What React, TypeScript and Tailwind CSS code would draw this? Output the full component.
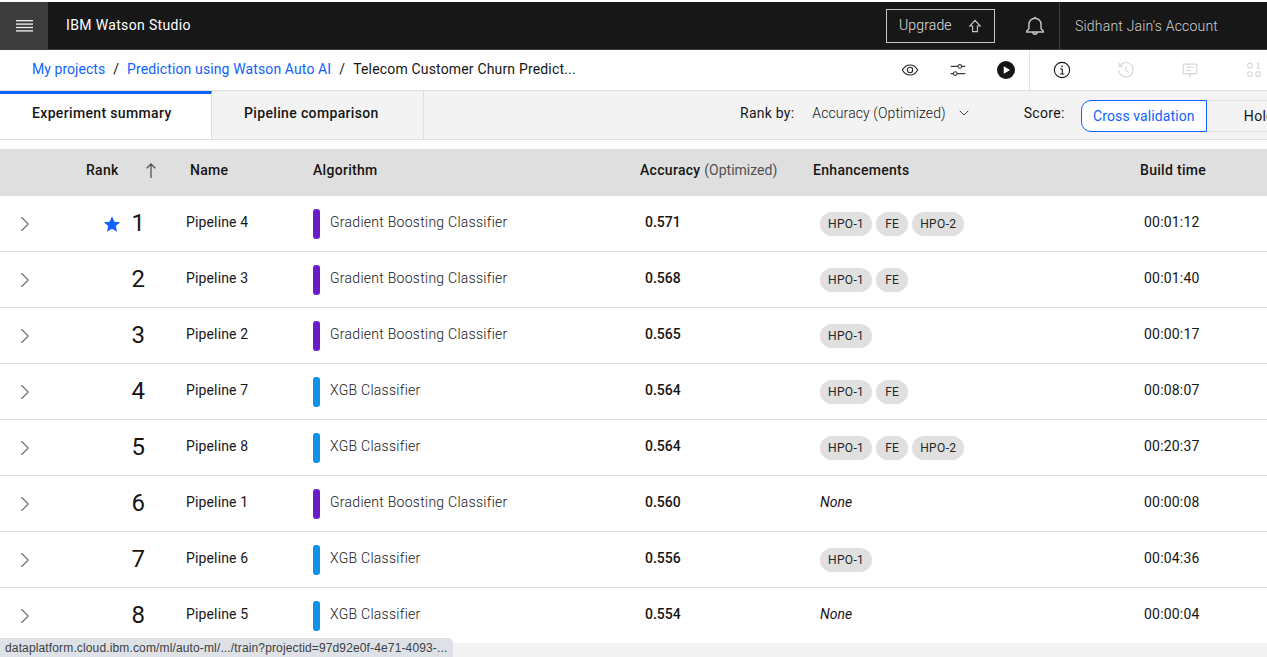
import { ChevronDown, ChevronRight } from 'lucide-react';

const plexStack = "font-['Roboto','Liberation_Sans',sans-serif]";

const PURPLE = 'bg-[#6a1bc4]';
const BLUE = 'bg-[#1192e8]';

type Row = {
  rank: number;
  name: string;
  algo: string;
  bar: string;
  accuracy: string;
  chips: string[];
  time: string;
};

const GBC = 'Gradient Boosting Classifier';
const XGB = 'XGB Classifier';

const rows: Row[] = [
  { rank: 1, name: 'Pipeline 4', algo: GBC, bar: PURPLE, accuracy: '0.571', chips: ['HPO-1', 'FE', 'HPO-2'], time: '00:01:12' },
  { rank: 2, name: 'Pipeline 3', algo: GBC, bar: PURPLE, accuracy: '0.568', chips: ['HPO-1', 'FE'], time: '00:01:40' },
  { rank: 3, name: 'Pipeline 2', algo: GBC, bar: PURPLE, accuracy: '0.565', chips: ['HPO-1'], time: '00:00:17' },
  { rank: 4, name: 'Pipeline 7', algo: XGB, bar: BLUE, accuracy: '0.564', chips: ['HPO-1', 'FE'], time: '00:08:07' },
  { rank: 5, name: 'Pipeline 8', algo: XGB, bar: BLUE, accuracy: '0.564', chips: ['HPO-1', 'FE', 'HPO-2'], time: '00:20:37' },
  { rank: 6, name: 'Pipeline 1', algo: GBC, bar: PURPLE, accuracy: '0.560', chips: [], time: '00:00:08' },
  { rank: 7, name: 'Pipeline 6', algo: XGB, bar: BLUE, accuracy: '0.556', chips: ['HPO-1'], time: '00:04:36' },
  { rank: 8, name: 'Pipeline 5', algo: XGB, bar: BLUE, accuracy: '0.554', chips: [], time: '00:00:04' },
];

function Icon({ children, className }: { children: React.ReactNode; className?: string }) {
  return (
    <svg viewBox="0 0 20 20" fill="none" stroke="currentColor" strokeWidth="1.2" className={className}>
      {children}
    </svg>
  );
}

function Header() {
  return (
    <header className="flex h-[48px] items-stretch border-b border-[#3d3d3d] bg-[#171717] text-white">
      <div className="flex w-[48px] items-center justify-center bg-[#3d3d3d]">
        <svg viewBox="0 0 17 12" className="h-3 w-[17px]" fill="#e8e8e8">
          <rect y="0" width="17" height="1.4" />
          <rect y="3.4" width="17" height="1.4" />
          <rect y="6.8" width="17" height="1.4" />
          <rect y="10.2" width="17" height="1.4" />
        </svg>
      </div>
      <div className="flex items-center pl-[18px] text-[14px] tracking-[0.35px]">IBM Watson Studio</div>
      <div className="ml-auto flex items-center">
        <button className="flex h-[34px] w-[109px] items-center border border-[#c6c6c6] pl-[12px] text-[14px] font-light tracking-[0.15px] text-[#e0e0e0]">
          Upgrade
          <Icon className="ml-[15px] h-4 w-4 text-[#c6c6c6]">
            <path d="M10 3 L3.5 10 H7 V17 H13 V10 H16.5 Z" strokeWidth="1.4" />
          </Icon>
        </button>
        <Icon className="ml-[29px] mr-[13px] h-[22px] w-[22px] text-[#c6c6c6]">
          <path d="M2.5 15.5 H17.5 V14.5 L15.5 12.5 V8.5 A5.5 5.5 0 0 0 4.5 8.5 V12.5 L2.5 14.5 Z" strokeWidth="1.3" />
          <path d="M8 15.5 A2 2 0 0 0 12 15.5" strokeWidth="1.3" />
          <path d="M10 3 V1.5" strokeWidth="1.3" />
        </Icon>
        <div className="flex h-full w-[208px] items-center border-l border-[#3d3d3d] pl-[15px] pt-[2px] text-[14px] font-light tracking-[0.2px] text-[#d0d0d0]">
          Sidhant Jain's Account
        </div>
      </div>
    </header>
  );
}

function Breadcrumb() {
  return (
    <div className="flex h-[40px] items-stretch bg-white">
      <div className="flex items-center pb-[2px] pl-[32px] text-[14px] tracking-[0.05px]">
        <span className="text-[#0f62fe]">My projects</span>
        <span className="mx-[8px] text-[#161616]">/</span>
        <span className="tracking-[0.12px] text-[#0f62fe]">Prediction using Watson Auto AI</span>
        <span className="mx-[8px] text-[#161616]">/</span>
        <span className="tracking-[0.17px] text-[#161616]">Telecom Customer Churn Predict...</span>
      </div>
      <div className="ml-auto flex items-center">
        <Icon className="h-[18px] w-[18px] text-[#262626]">
          <path d="M1.5 10 C4 5.5 7 4.5 10 4.5 C13 4.5 16 5.5 18.5 10 C16 14.5 13 15.5 10 15.5 C7 15.5 4 14.5 1.5 10 Z" />
          <circle cx="10" cy="10" r="3" />
        </Icon>
        <Icon className="ml-[30px] h-[18px] w-[18px] text-[#393939]">
          <path d="M2 6 H10 M14 6 H18 M2 14 H5 M9 14 H18" />
          <circle cx="12" cy="6" r="2" />
          <circle cx="7" cy="14" r="2" />
        </Icon>
        <svg viewBox="0 0 20 20" className="ml-[30px] h-[18px] w-[18px]">
          <circle cx="10" cy="10" r="10" fill="#161616" />
          <path d="M7.5 5.8 L14.5 10 L7.5 14.2 Z" fill="#fff" />
        </svg>
        <div className="ml-[14px] flex h-full w-[238px] items-center gap-[46px] border-l border-[#e0e0e0] pl-[23px]">
          <Icon className="h-[18px] w-[18px] shrink-0 text-[#161616]">
            <circle cx="10" cy="10" r="8.5" />
            <path d="M8 8.8 H10.3 V14.2 M8 14.4 H12.5" />
            <circle cx="10" cy="6" r="0.9" fill="currentColor" stroke="none" />
          </Icon>
          <Icon className="h-[18px] w-[18px] shrink-0 text-[#d6d6d6]">
            <path d="M3.2 5.5 A8 8 0 1 1 2 10" />
            <path d="M2.5 2 V6 H6.5" />
            <path d="M10 5.5 V10.5 L13 13" />
          </Icon>
          <Icon className="h-[18px] w-[18px] shrink-0 text-[#d6d6d6]">
            <path d="M2.5 3.5 H17.5 V14 H11.5 L9.5 17 V14 H2.5 Z" />
            <path d="M5.5 7 H14.5 M5.5 10.5 H11.5" />
          </Icon>
          <Icon className="h-[18px] w-[18px] shrink-0 text-[#d6d6d6]">
            <circle cx="5.5" cy="5" r="2.6" />
            <path d="M13 3 L14.8 2.4 V8 M13 8 H16.8" />
            <circle cx="5.5" cy="14.5" r="2.6" />
            <circle cx="14.5" cy="14.5" r="2.6" />
          </Icon>
        </div>
      </div>
    </div>
  );
}

function TabBar() {
  return (
    <div className="flex h-[50px] items-stretch overflow-hidden whitespace-nowrap border-y border-[#e0e0e0] bg-[#f3f3f3] text-[#161616]">
      <div className="flex w-[212px] shrink-0 items-center border-t-[3px] border-r border-t-[#0f62fe] border-r-[#e0e0e0] bg-white pb-[7px] pl-[32px] text-[14px] font-medium tracking-[0.35px]">
        Experiment summary
      </div>
      <div className="flex w-[212px] shrink-0 items-center border-r border-[#e0e0e0] pb-[4px] pl-[32px] text-[14px] font-medium tracking-[0.35px]">
        Pipeline comparison
      </div>
      <div className="ml-[316px] flex shrink-0 items-center pb-[4px] text-[14px] tracking-[0.25px]">Rank by:</div>
      <div className="ml-[18px] flex shrink-0 items-center pb-[4px] text-[14px] font-light tracking-[0.1px] text-[#161616]">
        Accuracy (Optimized)
        <ChevronDown size={16} strokeWidth={1.2} className="ml-[10px]" />
      </div>
      <div className="ml-[52px] flex shrink-0 items-center pb-[4px] text-[14px] tracking-[0.35px]">Score:</div>
      <div className="ml-[16px] mt-[2px] flex shrink-0 items-center">
        <div className="flex h-[32px] w-[126px] items-center justify-center rounded-l-[10px] border border-[#0f62fe] bg-white text-[14px] tracking-[0.1px] text-[#0f62fe]">
          Cross validation
        </div>
        <div className="flex h-[32px] w-[100px] shrink-0 items-center border-y border-[#e0e0e0] pl-[37px] text-[14px] tracking-[0.3px]">
          Holdout
        </div>
      </div>
    </div>
  );
}

function TableHead() {
  return (
    <div className="mt-[9px] flex h-[47px] items-center bg-[#dfdfdf] pb-[4px] text-[14px] font-medium tracking-[0.3px] text-[#161616]">
      <div className="flex w-[190px] items-center pl-[86px]">
        Rank
        <svg viewBox="0 0 10 15" className="ml-[27px] h-[15px] w-[10px]" fill="none" stroke="#565656" strokeWidth="1.3">
          <path d="M5 15 V1 M0.7 5.3 L5 1 L9.3 5.3" />
        </svg>
      </div>
      <div className="w-[123px]">Name</div>
      <div className="w-[327px]">Algorithm</div>
      <div className="w-[173px]">
        Accuracy <span className="font-normal tracking-normal text-[#525252]">(Optimized)</span>
      </div>
      <div className="w-[327px]">Enhancements</div>
      <div>Build time</div>
    </div>
  );
}

function TableRow({ row }: { row: Row }) {
  return (
    <div className="flex h-[56px] shrink-0 items-center border-b border-[#e0e0e0] bg-white text-[14px] text-[#161616]">
      <div className="flex w-[186px] items-center">
        <ChevronRight size={26} strokeWidth={1} className="ml-[12px] mt-[1px] text-[#6f6f6f]" />
        <div className="-mt-[2px] flex flex-1 items-center justify-end pr-[41px]">
          {row.rank === 1 && (
            <svg viewBox="0 0 20 20" className="mr-[11px] mt-[3px] h-[18px] w-[18px]" fill="#0f62fe">
              <path d="M10 1.5 L12.6 7.4 L19 8 L14.2 12.3 L15.6 18.6 L10 15.3 L4.4 18.6 L5.8 12.3 L1 8 L7.4 7.4 Z" />
            </svg>
          )}
          <span className="text-[24px] leading-none">{row.rank}</span>
        </div>
      </div>
      <div className="-mt-[2px] w-[127px] tracking-[0.15px]">{row.name}</div>
      <div className="flex w-[332px] items-center">
        <span className={`h-[30px] w-[7px] rounded-[3px] ${row.bar}`} />
        <span className="-mt-[2px] ml-[10px] font-light tracking-[0.27px] text-[#161616]">{row.algo}</span>
      </div>
      <div className="-mt-[2px] w-[175px] font-medium">{row.accuracy}</div>
      <div className="flex w-[324px] items-center gap-[4px]">
        {row.chips.length === 0 && <span className="-mt-[2px] italic">None</span>}
        {row.chips.map((chip) => (
          <span
            key={chip}
            className="flex h-[24px] min-w-[32px] items-center justify-center rounded-full bg-[#e0e0e0] px-[8px] text-[12px] tracking-[0.35px] text-[#262626]"
          >
            {chip}
          </span>
        ))}
      </div>
      <div className="-mt-[2px] tracking-[0.2px]">{row.time}</div>
    </div>
  );
}

export default function App() {
  return (
    <div className={`relative flex h-[657px] w-[1267px] flex-col overflow-hidden bg-white pt-[2px] ${plexStack}`}>
      <Header />
      <Breadcrumb />
      <TabBar />
      <TableHead />
      <div className="min-h-0 flex-1 overflow-hidden">
        {rows.map((row) => (
          <TableRow key={row.rank} row={row} />
        ))}
      </div>
      <div className="h-[14px] shrink-0 bg-[#f3f3f3]" />
      {/* browser's link preview over the page */}
      <div className="absolute bottom-0 left-0 flex h-[19px] w-[453px] items-center whitespace-nowrap rounded-tr-[5px] bg-[#dee1e6] pl-[5px] font-['Liberation_Sans',sans-serif] text-[12px] tracking-[0.14px] text-[#3c4043]">
        dataplatform.cloud.ibm.com/ml/auto-ml/.../train?projectid=97d92e0f-4e71-4093-...
      </div>
    </div>
  );
}
